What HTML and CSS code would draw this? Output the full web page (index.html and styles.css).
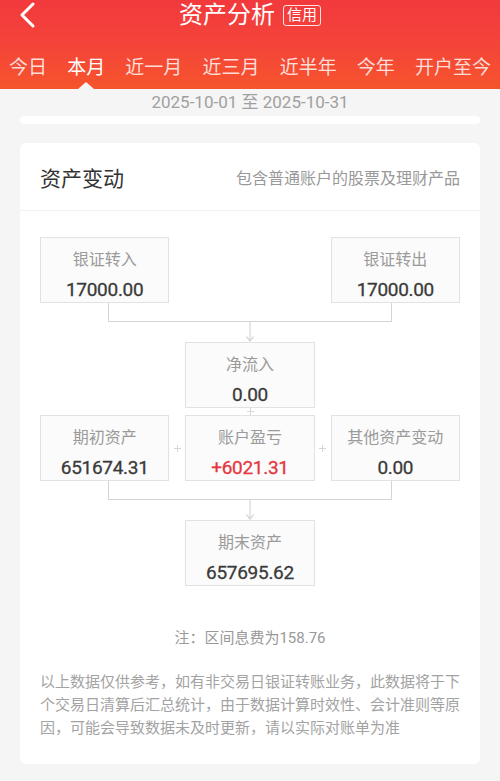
FILE: index.html
```html
<!DOCTYPE html>
<html lang="zh-CN">
<head>
  <meta charset="UTF-8">
  <title>资产分析</title>
  <link rel="stylesheet" href="styles.css">
</head>
<body>
  <div class="header">
    <div class="titlebar">
      <div class="back">
        <svg width="16" height="26" viewBox="0 0 16 26"><polyline points="14,2 3,13 14,24" fill="none" stroke="#fff" stroke-width="3" stroke-linecap="round" stroke-linejoin="round"/></svg>
      </div>
      <div class="title">资产分析<span class="badge">信用</span></div>
      <div></div>
    </div>
    <div class="tabs">
      <span class="tab">今日</span>
      <span class="tab active">本月</span>
      <span class="tab">近一月</span>
      <span class="tab">近三月</span>
      <span class="tab">近半年</span>
      <span class="tab">今年</span>
      <span class="tab">开户至今</span>
    </div>
  </div>

  <div class="daterange">2025-10-01 至 2025-10-31</div>
  <div class="strip"></div>

  <div class="card">
    <div class="card-head">
      <span class="card-title">资产变动</span>
      <span class="card-sub">包含普通账户的股票及理财产品</span>
    </div>
    <div class="card-body">
      <div class="row">
        <div class="box"><div class="label">银证转入</div><div class="value">17000.00</div></div>
        <div></div><div></div><div></div>
        <div class="box"><div class="label">银证转出</div><div class="value">17000.00</div></div>
      </div>
      <div class="bracket"></div>
      <div class="stem">
        <svg width="14" height="20" viewBox="0 0 14 20"><line x1="7" y1="0" x2="7" y2="19" stroke="#cfcfcf"/><polyline points="3.5,14.5 7,19 10.5,14.5" fill="none" stroke="#cfcfcf" stroke-width="1.2"/></svg>
      </div>
      <div class="row">
        <div></div><div></div>
        <div class="box"><div class="label">净流入</div><div class="value">0.00</div></div>
        <div></div><div></div>
      </div>
      <div class="plus-v">
        <svg width="7" height="7" viewBox="0 0 7 7"><path d="M3.5 0v7M0 3.5h7" stroke="#d6d6d6"/></svg>
      </div>
      <div class="row">
        <div class="box"><div class="label">期初资产</div><div class="value">651674.31</div></div>
        <div class="plus"><svg width="7" height="7" viewBox="0 0 7 7"><path d="M3.5 0v7M0 3.5h7" stroke="#d6d6d6"/></svg></div>
        <div class="box"><div class="label">账户盈亏</div><div class="value up">+6021.31</div></div>
        <div class="plus"><svg width="7" height="7" viewBox="0 0 7 7"><path d="M3.5 0v7M0 3.5h7" stroke="#d6d6d6"/></svg></div>
        <div class="box"><div class="label">其他资产变动</div><div class="value">0.00</div></div>
      </div>
      <div class="bracket"></div>
      <div class="stem">
        <svg width="14" height="20" viewBox="0 0 14 20"><line x1="7" y1="0" x2="7" y2="19" stroke="#cfcfcf"/><polyline points="3.5,14.5 7,19 10.5,14.5" fill="none" stroke="#cfcfcf" stroke-width="1.2"/></svg>
      </div>
      <div class="row">
        <div></div><div></div>
        <div class="box"><div class="label">期末资产</div><div class="value">657695.62</div></div>
        <div></div><div></div>
      </div>

      <div class="note">注：区间息费为158.76</div>
      <p class="disclaimer">以上数据仅供参考，如有非交易日银证转账业务，此数据将于下个交易日清算后汇总统计，由于数据计算时效性、会计准则等原因，可能会导致数据未及时更新，请以实际对账单为准</p>
    </div>
  </div>
</body>
</html>
```

FILE: styles.css
```css
body { margin: 0; background: #f5f5f5; font-family: Roboto, "Noto Sans CJK SC", sans-serif; color: #333; }

.header { background: linear-gradient(180deg, #f2393c 0%, #f4443a 50%, #f6542c 100%); color: #fff; }
.titlebar { display: grid; grid-template-columns: 1fr auto 1fr; align-items: center; height: 30px; }
.back { padding-left: 19px; height: 26px; }
.title { display: flex; align-items: center; font-size: 24px; line-height: 30px; }
.badge { margin-left: 8px; font-size: 15px; line-height: 19px; padding: 0 3px; border: 1px solid rgba(255,255,255,0.85); border-radius: 3px; }
.tabs { display: flex; justify-content: space-between; height: 59px; box-sizing: border-box; padding: 25px 9px 0; }
.tab { position: relative; font-size: 19px; line-height: 26px; padding-bottom: 8px; color: rgba(255,255,255,0.82); }
.tab.active { color: #fff; }
.tab.active::after { content: ""; position: absolute; left: 50%; bottom: 0; margin-left: -8px; border-left: 8px solid transparent; border-right: 8px solid transparent; border-bottom: 7px solid #f5f5f5; }

.daterange { text-align: center; font-size: 17px; line-height: 27px; color: #a0a0a0; }
.strip { height: 8px; margin: 0 20px; background: #fff; border-radius: 5px; }

.card { margin: 19px 20px 0; background: #fff; border-radius: 6px; }
.card-head { display: flex; justify-content: space-between; align-items: center; height: 67px; padding: 0 20px; border-bottom: 1px solid #f2f2f2; }
.card-title { font-size: 21px; color: #333; }
.card-sub { font-size: 16px; color: #999; }
.card-body { padding: 26px 20px 24px; }

.row { display: grid; grid-template-columns: 1fr 16px 1fr 16px 1fr; }
.box { height: 66px; box-sizing: border-box; border: 1px solid #e2e2e2; background: #fbfbfb; text-align: center; padding-top: 11px; }
.label { font-size: 16px; line-height: 22px; color: #9a9a9a; }
.value { font-size: 19px; line-height: 24px; margin-top: 7px; letter-spacing: -0.3px; color: #3a3a3a; -webkit-text-stroke: 0.3px #3a3a3a; }
.value.up { color: #e6363f; -webkit-text-stroke-color: #e6363f; }
.plus { display: flex; align-items: center; justify-content: center; }
.plus-v { height: 7px; display: flex; justify-content: center; }
.plus svg, .plus-v svg { display: block; }

.bracket { height: 19px; box-sizing: border-box; margin: 0 68px; border: 1px solid #d4d4d4; border-top: 0; }
.stem { height: 20px; display: flex; justify-content: center; }
.stem svg { display: block; }

.note { margin-top: 41px; text-align: center; font-size: 15px; line-height: 22px; color: #999; }
.disclaimer { margin: 22px 0 0; font-size: 15px; line-height: 23px; color: #a3a3a3; }
```
